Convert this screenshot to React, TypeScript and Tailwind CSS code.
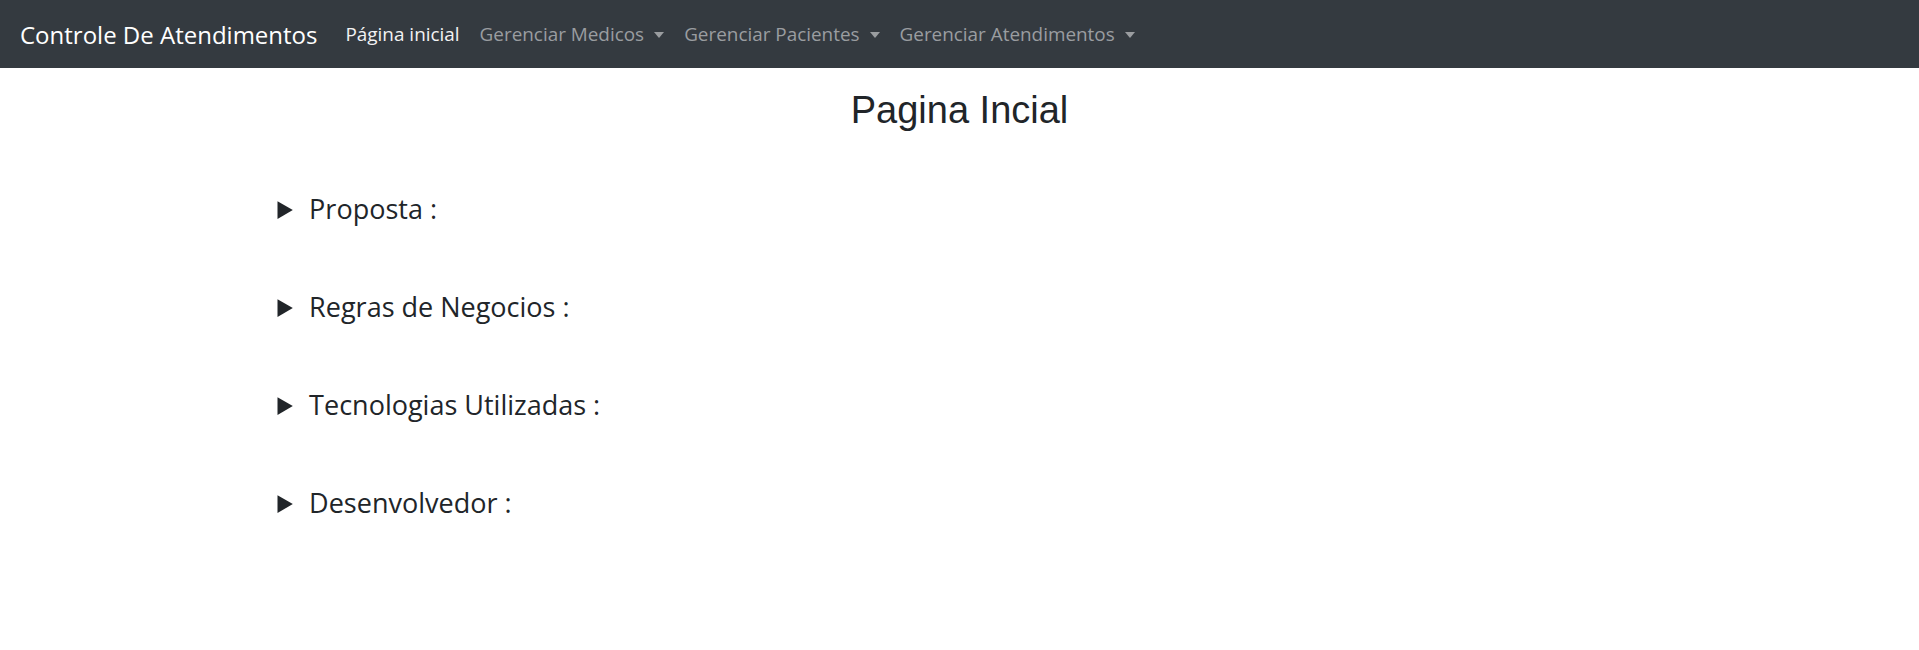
import { useState } from "react";

const menus = ["Gerenciar Medicos", "Gerenciar Pacientes", "Gerenciar Atendimentos"];

const sections = [
  { title: "Proposta :", body: "Sistema para controle de atendimentos medicos." },
  { title: "Regras de Negocios :", body: "Cadastro de medicos, pacientes e atendimentos." },
  { title: "Tecnologias Utilizadas :", body: "React, TypeScript e Tailwind CSS." },
  { title: "Desenvolvedor :", body: "" },
];

function NavDropdown({ label }: { label: string }) {
  const [open, setOpen] = useState(false);
  return (
    <div className="relative">
      <button
        onClick={() => setOpen(!open)}
        className="flex items-center px-[10px] text-[#9a9da0] hover:text-[#c8cacc]"
      >
        {label}
        <span className="ml-[10px] mt-[2px] inline-block border-x-[5.5px] border-t-[6px] border-x-transparent border-t-current" />
      </button>
    </div>
  );
}

export default function App() {
  return (
    <div className="min-h-[650px] bg-white font-['Open_Sans',sans-serif] text-[#212529]">
      <nav className="flex h-[68px] items-center bg-[#343a40] px-[20px] pt-[1px]">
        <a className="mr-[18px] text-[24px] text-white">Controle De Atendimentos</a>
        <div className="flex items-center text-[18.9px]">
          <a className="px-[10px] text-[#f2f2f3]">Página inicial</a>
          {menus.map((m) => (
            <NavDropdown key={m} label={m} />
          ))}
        </div>
      </nav>

      <main className="mx-auto w-[1364px]">
        <h2 className="mt-[20px] text-center font-['Liberation_Sans',Arial,sans-serif] text-[38px] leading-[1.2]">
          Pagina Incial
        </h2>
        <div className="mt-[53px] flex flex-col gap-[55px]">
          {sections.map((s) => (
            <details key={s.title} className="text-[27px] leading-[43px]">
              <summary className="cursor-pointer">
                <span className="pl-[3px]">{s.title}</span>
              </summary>
              {s.body && <p className="pl-[32px] text-[19px]">{s.body}</p>}
            </details>
          ))}
        </div>
      </main>
    </div>
  );
}
